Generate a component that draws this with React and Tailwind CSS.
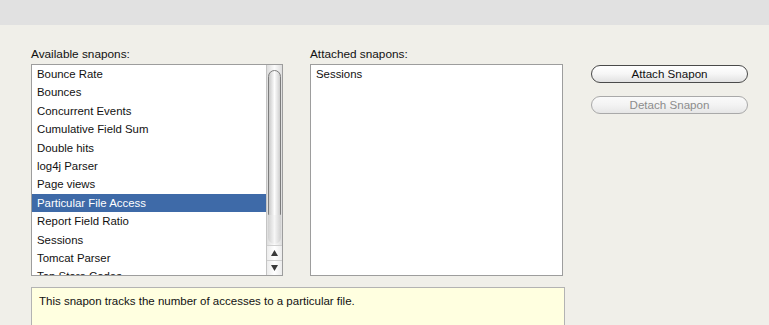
import React from "react";

const available = [
  "Bounce Rate",
  "Bounces",
  "Concurrent Events",
  "Cumulative Field Sum",
  "Double hits",
  "log4j Parser",
  "Page views",
  "Particular File Access",
  "Report Field Ratio",
  "Sessions",
  "Tomcat Parser",
  "Top Store Codes",
];

function ScrollBar() {
  return (
    <div className="flex w-[16px] flex-col border-l border-[#c4c4c4] bg-[#f4f4f4]">
      {/* Track + thumb */}
      <div className="flex h-[180px] flex-col items-center bg-gradient-to-r from-[#dedede] via-[#fbfbfb] to-[#dedede] pt-[5px]">
        <div className="h-[151px] w-[13px] rounded-full border border-[#7d7d7d] bg-gradient-to-r from-[#c9c9c9] via-[#fdfdfd] to-[#cfcfcf]" />
        <div className="mt-[-6px] h-[29px] w-[13px] rounded-b-full bg-gradient-to-r from-[#d0d0d0] via-[#f6f6f6] to-[#d0d0d0]" />
      </div>
      <div className="flex h-[15px] items-center justify-center border-t border-[#cfcfcf] bg-gradient-to-r from-[#ececec] via-white to-[#ececec]">
        <svg width="7" height="6" viewBox="0 0 7 6">
          <path d="M3.5 0 L7 6 L0 6 Z" fill="#3a3a3a" />
        </svg>
      </div>
      <div className="flex h-[15px] items-center justify-center border-t border-[#cfcfcf] bg-gradient-to-r from-[#ececec] via-white to-[#ececec]">
        <svg width="7" height="6" viewBox="0 0 7 6">
          <path d="M0 0 L7 0 L3.5 6 Z" fill="#3a3a3a" />
        </svg>
      </div>
    </div>
  );
}

export default function App() {
  return (
    <div className="h-[325px] w-[769px] overflow-hidden bg-[#f0efe9] font-['Liberation_Sans',Arial,sans-serif] text-[#111]">
      {/* Title strip */}
      <div className="h-[25px] bg-[#e1e1e1]" />

      <div className="flex pl-[31px] pt-[22px]">
        {/* Available */}
        <div className="w-[252px]">
          <div className="h-[17px] text-[11.8px] leading-[14px]">Available snapons:</div>
          <div className="flex h-[212px] border border-[#9d9d9d] bg-white">
            <div className="flex-1 overflow-hidden">
              {available.map((name) => (
                <div
                  key={name}
                  className={
                    name === "Particular File Access"
                      ? "h-[18.4px] bg-[#3e6aa8] pl-[5px] text-[11.4px] leading-[18.4px] text-white"
                      : "h-[18.4px] pl-[5px] text-[11.4px] leading-[18.4px]"
                  }
                >
                  {name}
                </div>
              ))}
            </div>
            <ScrollBar />
          </div>
        </div>

        {/* Attached */}
        <div className="ml-[27px] w-[253px]">
          <div className="h-[17px] text-[11.8px] leading-[14px]">Attached snapons:</div>
          <div className="h-[212px] border border-[#9d9d9d] bg-white">
            <div className="h-[18.4px] pl-[5px] text-[11.4px] leading-[18.4px]">Sessions</div>
          </div>
        </div>

        {/* Buttons */}
        <div className="ml-[28px] flex w-[157px] flex-col gap-[13px] pt-[18px]">
          <button className="h-[18px] rounded-full border border-[#4a4a4a] bg-gradient-to-b from-white via-[#f6f6f6] to-[#e2e2e2] text-[11.6px] leading-[16px] text-[#111]">
            Attach Snapon
          </button>
          <button className="h-[18px] rounded-full border border-[#a9a9a9] bg-gradient-to-b from-[#fafafa] via-[#f3f3f3] to-[#e6e6e6] text-[11.6px] leading-[16px] text-[#8c8c8c]">
            Detach Snapon
          </button>
        </div>
      </div>

      {/* Description */}
      <div className="ml-[31px] mt-[11px] h-[60px] w-[534px] border border-[#b3b3b3] bg-[#ffffe0] px-[7px] pt-[6px] text-[11.5px] leading-[14px]">
        This snapon tracks the number of accesses to a particular file.
      </div>
    </div>
  );
}
